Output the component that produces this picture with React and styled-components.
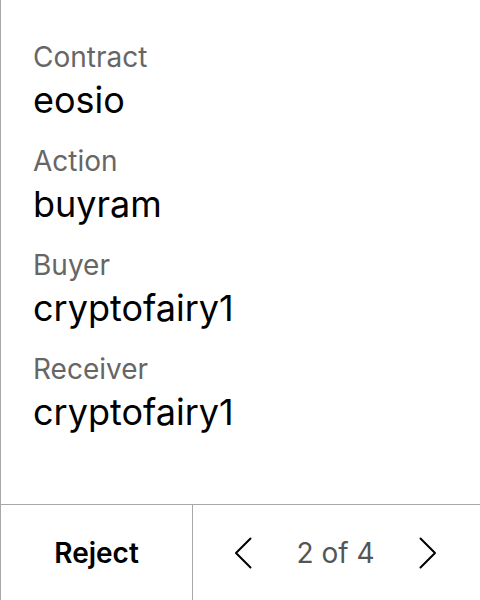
import React from "react";
import styled, { createGlobalStyle } from "styled-components";

const GlobalStyle = createGlobalStyle`
  html, body {
    margin: 0;
    padding: 0;
    background: #fff;
  }
  body {
    font-family: Inter, "Noto Sans", sans-serif;
  }
`;

const Screen = styled.div`
  width: 480px;
  height: 600px;
  box-sizing: border-box;
  border-left: 1px solid #a8a8a8;
  display: flex;
  flex-direction: column;
`;

const Fields = styled.div`
  flex: 1;
  padding: 40px 32px 0;
  display: flex;
  flex-direction: column;
  gap: 18px;
`;

const Field = styled.div`
  display: flex;
  flex-direction: column;
`;

const Label = styled.div`
  font-size: 28px;
  line-height: 34px;
  color: #666;
`;

const Value = styled.div`
  font-size: 36px;
  line-height: 52px;
  color: #000;
`;

const Footer = styled.div`
  height: 95px;
  border-top: 1px solid #a8a8a8;
  display: flex;
`;

const RejectButton = styled.button`
  width: 192px;
  border: none;
  border-right: 1px solid #a8a8a8;
  background: none;
  font-family: inherit;
  font-size: 28px;
  font-weight: 600;
  color: #000;
  padding: 0;
`;

const Pager = styled.div`
  flex: 1;
  display: flex;
  align-items: center;
  justify-content: space-between;
  padding: 0 40px 0 38px;
`;

const Arrow = styled.button`
  border: none;
  background: none;
  padding: 0;
  width: 24px;
  height: 36px;
  display: flex;
  align-items: center;
  justify-content: center;
`;

const PageText = styled.span`
  font-size: 28px;
  color: #555;
`;

const Chevron = ({ dir }) => (
  <svg width="20" height="32" viewBox="0 0 20 32" fill="none">
    <path
      d={dir === "left" ? "M17.5 1.5 L3 16 L17.5 30.5" : "M2.5 1.5 L17 16 L2.5 30.5"}
      stroke="#000"
      strokeWidth="2"
      strokeLinecap="round"
      strokeLinejoin="round"
    />
  </svg>
);

const fields = [
  { label: "Contract", value: "eosio" },
  { label: "Action", value: "buyram" },
  { label: "Buyer", value: "cryptofairy1" },
  { label: "Receiver", value: "cryptofairy1" },
];

const App = () => (
  <>
    <GlobalStyle />
    <Screen>
      <Fields>
        {fields.map((f) => (
          <Field key={f.label}>
            <Label>{f.label}</Label>
            <Value>{f.value}</Value>
          </Field>
        ))}
      </Fields>
      <Footer>
        <RejectButton>Reject</RejectButton>
        <Pager>
          <Arrow><Chevron dir="left" /></Arrow>
          <PageText>2 of 4</PageText>
          <Arrow><Chevron dir="right" /></Arrow>
        </Pager>
      </Footer>
    </Screen>
  </>
);

export default App;
